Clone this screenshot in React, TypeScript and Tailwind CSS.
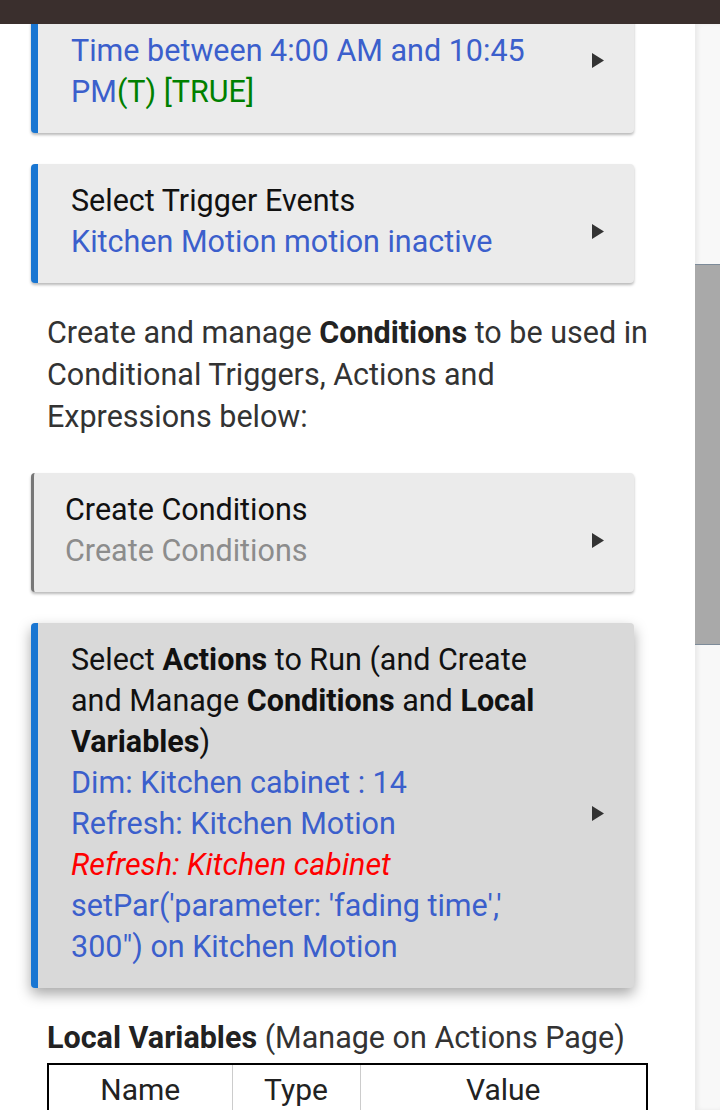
import React from 'react';

const font = { fontFamily: 'Roboto, "Liberation Sans", sans-serif' };

const Arrow: React.FC = () => (
  <div className="w-[14px] ml-[20px] mt-[20px] shrink-0 flex justify-center">
    <svg width="14" height="17" viewBox="0 0 14 17">
      <path d="M1 1 L13 8.5 L1 16 Z" fill="#333" />
    </svg>
  </div>
);

interface CardProps {
  children: React.ReactNode;
  accent?: 'blue' | 'gray';
  hover?: boolean;
  className?: string;
}

const Card: React.FC<CardProps> = ({ children, accent = 'blue', hover = false, className = '' }) => (
  <div
    className={`flex items-center rounded-[4px] pt-[16px] pb-[21px] pr-[29px] ${
      accent === 'blue' ? 'border-l-[7px] border-[#1976d2] pl-[33px]' : 'border-l-[3px] border-[#777] pl-[31px]'
    } ${hover ? 'bg-[#d9d9d9] shadow-[0_6px_14px_rgba(0,0,0,0.35)]' : 'bg-[#ebebeb] shadow-[0_2px_3px_rgba(0,0,0,0.28)]'} ${className}`}
  >
    <div className="flex-1 text-[30.5px] leading-[41px]">{children}</div>
    <Arrow />
  </div>
);

const blue = 'text-[#3b5fcc]';

export default function App() {
  return (
    <div className="w-[720px] h-[1110px] flex flex-col overflow-hidden bg-white" style={font}>
      <div className="h-[24px] bg-[#3a2f2d] shrink-0" />
      <div className="flex flex-1 overflow-hidden">
        <div className="w-[695px] overflow-hidden">
          <div className="ml-[31px] w-[603px] mt-[-51px]">
            <Card>
              <div className="text-[#111]">Select Conditions</div>
              <div className={blue}>
                Time between 4:00 AM and 10:45 PM<span className="text-[#008000]">(T) [TRUE]</span>
              </div>
            </Card>
            <Card className="mt-[31px]">
              <div className="text-[#111]">Select Trigger Events</div>
              <div className={blue}>Kitchen Motion motion inactive</div>
            </Card>
          </div>
          <p className="ml-[47px] w-[605px] mt-[29px] text-[30.5px] leading-[42px] text-[#333]">
            Create and manage <b className="text-[#222]">Conditions</b> to be used in Conditional Triggers, Actions and Expressions below:
          </p>
          <div className="ml-[31px] w-[603px] mt-[35px]">
            <Card accent="gray">
              <div className="text-[#111]">Create Conditions</div>
              <div className="text-[#8c8c8c]">Create Conditions</div>
            </Card>
            <Card hover className="mt-[31px]">
              <div className="text-[#111]">
                Select <b>Actions</b> to Run (and Create and Manage <b>Conditions</b> and <b>Local Variables</b>)
              </div>
              <div className={blue}>Dim: Kitchen cabinet : 14</div>
              <div className={blue}>Refresh: Kitchen Motion</div>
              <div className="text-[#ff0000] italic">Refresh: Kitchen cabinet</div>
              <div className={blue}>setPar('parameter: 'fading time',' 300") on Kitchen Motion</div>
            </Card>
          </div>
          <div className="ml-[47px] mt-[29px] text-[30.5px] leading-[42px] text-[#333]">
            <b className="text-[#222]">Local Variables</b> (Manage on Actions Page)
          </div>
          <table className="ml-[47px] mt-[4px] w-[601px] border-2 border-black border-collapse">
            <thead>
              <tr className="text-[30px] leading-[42px] text-[#222]">
                <th className="w-[184px] font-normal pt-[4px] border-r border-[#ccc]">Name</th>
                <th className="w-[128px] font-normal pt-[4px] border-r border-[#ccc]">Type</th>
                <th className="font-normal pt-[4px]">Value</th>
              </tr>
            </thead>
            <tbody>
              <tr className="h-[40px]">
                <td className="border-r border-[#ccc]" />
                <td className="border-r border-[#ccc]" />
                <td />
              </tr>
            </tbody>
          </table>
        </div>
        <div className="w-[25px] flex flex-col bg-[#f8f8f8] shadow-[inset_3px_0_4px_rgba(0,0,0,0.06)]">
          <div className="h-[240px] shrink-0" />
          <div className="h-[381px] shrink-0 bg-[#a9a9a9] border-t border-b border-[#7d8b99]" />
          <div className="flex-1" />
        </div>
      </div>
    </div>
  );
}
